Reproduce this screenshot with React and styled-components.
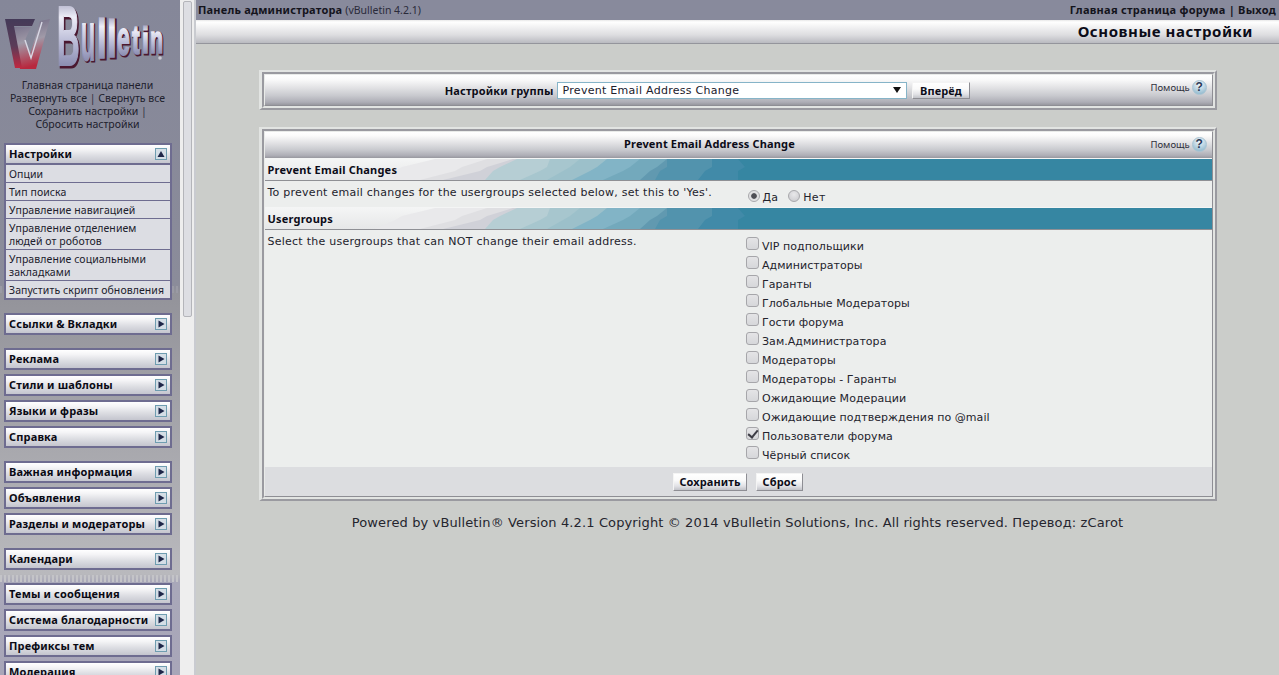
import React from "react";
import styled, { createGlobalStyle } from "styled-components";

const Global = createGlobalStyle`
  html, body { margin: 0; padding: 0; height: 100%; overflow: hidden; background: #cbcdca; }
  #root { height: 100%; }
  * { box-sizing: border-box; }
`;

const TAHOMA = `"Noto Sans", "Liberation Sans", sans-serif`;
const VERDANA = `"DejaVu Sans", "Liberation Sans", sans-serif`;

const Page = styled.div`
  display: flex;
  height: 675px;
  overflow: hidden;
`;

const Sidebar = styled.aside`
  width: 180px;
  flex: none;
  height: 675px;
  overflow: hidden;
  padding-left: 4px;
  font-family: ${TAHOMA};
  font-size: 10.5px;
  color: #20202c;
  background:
    repeating-linear-gradient(90deg, #9a9aa4 0 2px, transparent 2px 4px) 0 286px / 180px 7px no-repeat,
    repeating-linear-gradient(90deg, #c4c4c8 0 2px, transparent 2px 4px) 0 575px / 180px 7px no-repeat,
    linear-gradient(180deg, #858799 0, #8b8c9a 285px, #93939a 293px, #b9b9bd 574px, #a9a8b9 582px, #a8a6b8 675px);
`;

const Logo = styled.svg`
  display: block;
  width: 176px;
  height: 79px;
  margin-left: -4px;
`;

const QuickLinks = styled.div`
  width: 167px;
  height: 64px;
  text-align: center;
  line-height: 13px;
  white-space: nowrap;
`;

const Sep = styled.span`
  color: #303040;
`;

const NavStack = styled.div`
  display: flex;
  flex-direction: column;
  gap: 13px;
`;

const NavSection = styled.div`
  display: flex;
  flex-direction: column;
  gap: 4px;
`;

const NavGroup = styled.div`
  width: 168px;
  border: 2px solid #6e6c90;
  background: #6e6c90;
`;

const NavHead = styled.div`
  height: 18px;
  display: flex;
  align-items: center;
  justify-content: space-between;
  padding: 0 3px 1px 3px;
  font-weight: 700;
  font-size: 11px;
  letter-spacing: 0.15px;
  color: #0a0a14;
  white-space: nowrap;
  background: linear-gradient(180deg, #ffffff 0, #f4f4f6 25%, #dcdde2 60%, #c4c5ce 100%);
`;

const NavArrow = styled.svg`
  width: 12px;
  height: 12px;
  flex: none;
`;

const NavItem = styled.div`
  margin-top: 1px;
  padding: 3px 3px 1px 3px;
  line-height: 13px;
  letter-spacing: 0.08px;
  color: #20202c;
  background: #dcdde3;
  white-space: pre-line;
  ${NavHead} + & {
    margin-top: 2px;
  }
`;

const Scrollbar = styled.div`
  width: 16px;
  flex: none;
  height: 675px;
  padding: 1px 2px 0 3px;
  background: #eeeeee;
  border-right: 2px solid #c9cbd0;
`;

const Thumb = styled.div`
  height: 316px;
  background: #dddee3;
  border: 1px solid #b4b5ba;
  border-radius: 2px;
`;

const Main = styled.main`
  flex: 1;
  min-width: 0;
  font-family: ${VERDANA};
  color: #23232c;
`;

const TopBar = styled.div`
  height: 20px;
  padding: 0 3px 2px 2px;
  display: flex;
  align-items: center;
  justify-content: space-between;
  background: #888a9c;
  font-family: ${TAHOMA};
  font-size: 11px;
  color: #14141c;
  white-space: nowrap;
`;

const Strong = styled.b`
  font-weight: 700;
  letter-spacing: ${(p) => p.$ls}px;
`;

const Version = styled.span`
  font-size: 10.5px;
  color: #2a2a3a;
`;

const TitleBar = styled.header`
  height: 24px;
  padding: 0 26px 1px 0;
  display: flex;
  align-items: center;
  justify-content: flex-end;
  font-family: ${TAHOMA};
  font-weight: 700;
  font-size: 15px;
  letter-spacing: 0.55px;
  color: #0c0c18;
  border-bottom: 1px solid #94959c;
  background: linear-gradient(180deg, #e8e8e8 0, #ffffff 2px, #f2f2f3 30%, #dddde0 65%, #b9bac0 100%);
`;

const Content = styled.div`
  padding-top: 26px;
`;

const Frame = styled.section`
  width: 958px;
  margin: 0 auto ${(p) => p.$gap || 0}px;
  border-style: solid;
  border-width: 2px 2px 2px 3px;
  border-color: #e2e4e2 #9a9aa0 #9a9aa0 #e2e4e2;
`;

const FrameInner = styled.div`
  border-style: solid;
  border-width: 2px;
  border-color: #9a9aa0 #e2e4e2 #e2e4e2 #9a9aa0;
`;

const FrameBody = styled.div`
  border-style: solid;
  border-width: 1px;
  border-color: #e9ebe9 #8e8e94 #8e8e94 #e9ebe9;
  background: #eceeed;
`;

const CatBar = styled.div`
  height: ${(p) => p.$h}px;
  padding-bottom: ${(p) => p.$pb || 0}px;
  display: flex;
  align-items: center;
  background: linear-gradient(180deg, #ffffff 0, #fbfbfb 14%, #e6e6e8 38%, #c9cacf 68%, #aeaeb6 90%, #98989f 100%);
`;

const CatMain = styled.div`
  flex: 1;
  display: flex;
  align-items: center;
  justify-content: center;
  gap: 3px;
  padding-left: ${(p) => p.$pl || 0}px;
  font-family: ${TAHOMA};
  font-weight: 700;
  font-size: 11px;
  letter-spacing: 0.15px;
  color: #0c0c18;
  white-space: nowrap;
`;

const Help = styled.div`
  width: 61px;
  flex: none;
  display: flex;
  align-items: center;
  gap: 2px;
  font-family: ${TAHOMA};
  font-size: 9.5px;
  color: #30303c;
  transform: translateY(${(p) => p.$dy}px);
`;

const HelpBall = styled.span`
  width: 15px;
  height: 15px;
  flex: none;
  display: flex;
  align-items: center;
  justify-content: center;
  border-radius: 50%;
  font-family: "Liberation Sans", sans-serif;
  font-size: 12px;
  font-weight: 700;
  color: #2a3a58;
  background: radial-gradient(circle at 50% 25%, #f2f6f8 0, #bcd4e2 50%, #7fafc6 100%);
  border: 1px solid #a9c4d3;
`;

const Select = styled.div`
  width: 350px;
  height: 17px;
  padding: 0 5px 0 5px;
  display: flex;
  align-items: center;
  justify-content: space-between;
  background: #ffffff;
  border: 1px solid #86b4c8;
  font-family: ${VERDANA};
  font-weight: 400;
  font-size: 11px;
  letter-spacing: 0.28px;
  color: #20202c;
`;

const Caret = styled.span`
  width: 0;
  height: 0;
  border-left: 4px solid transparent;
  border-right: 4px solid transparent;
  border-top: 6px solid #111;
`;

const Button = styled.button`
  height: ${(p) => p.$h}px;
  padding: 0 ${(p) => p.$pad}px;
  margin: 0;
  border: 1px solid;
  border-color: #f4f4f4 #8e8e94 #8e8e94 #f4f4f4;
  background: linear-gradient(180deg, #ffffff 0, #fafafa 40%, #e2e2e6 75%, #c2c3c9 100%);
  font-family: ${TAHOMA};
  font-weight: 700;
  font-size: 11px;
  letter-spacing: 0.1px;
  line-height: 13px;
  color: #0c0c18;
`;

const GoButton = styled(Button)`
  margin-left: 2px;
`;

const SectionRow = styled.div`
  position: relative;
  height: 23px;
  padding: 0 0 1px 3px;
  display: flex;
  align-items: center;
  border-top: 1px solid #f4f5f5;
  border-bottom: 1px solid #8f9095;
  background: linear-gradient(180deg, #f4f5f5 0, #e6e7e8 100%);
  font-family: ${TAHOMA};
  font-weight: 700;
  font-size: 11px;
  letter-spacing: 0.2px;
  color: #0c0c18;
`;

const SectionLabel = styled.span`
  position: relative;
`;

const Wave = styled.svg`
  position: absolute;
  left: 0;
  top: 0;
  width: 947px;
  height: 21px;
`;

const Row = styled.div`
  display: flex;
  min-height: ${(p) => p.$h}px;
  font-size: 11px;
  letter-spacing: 0.25px;
`;

const RowLabel = styled.div`
  width: 481px;
  padding: ${(p) => p.$top}px 0 0 3px;
  line-height: 13px;
`;

const RadioGroup = styled.div`
  display: flex;
  align-items: flex-start;
  padding: 10px 0 0 2px;
`;

const RadioLabel = styled.label`
  display: flex;
  align-items: center;
  margin-right: 10px;
  line-height: 13px;
`;

const RadioBox = styled.input`
  appearance: none;
  width: 12px;
  height: 12px;
  margin: -4px 3px 0 0;
  border-radius: 50%;
  border: 1px solid #a8a8ac;
  background: ${(p) =>
    p.checked
      ? "radial-gradient(circle, #4e4e54 0, #4e4e54 2.4px, #dcdcde 3.2px, #eeeeee 100%)"
      : "radial-gradient(circle at 50% 35%, #e8e8ea 0, #c8c8cc 100%)"};
`;

const CheckList = styled.div`
  display: flex;
  flex-direction: column;
  padding-top: 7px;
  letter-spacing: 0.05px;
`;

const CheckItem = styled.label`
  height: 19px;
  display: flex;
  align-items: flex-start;
  line-height: 19px;
  white-space: nowrap;
`;

const CheckBox = styled.input`
  appearance: none;
  position: relative;
  width: 13px;
  height: 13px;
  margin: 0 3.5px 0 0;
  border: 1px solid #a6a6aa;
  border-radius: 3px;
  background: linear-gradient(180deg, #e4e4e6, #d6d7da);
  &:checked::before {
    content: "";
    position: absolute;
    left: 3px;
    top: 0;
    width: 4px;
    height: 8px;
    border: solid #3c3c44;
    border-width: 0 2px 2px 0;
    transform: rotate(40deg);
  }
`;

const FootBar = styled.div`
  height: 29px;
  display: flex;
  align-items: center;
  justify-content: center;
  gap: 9px;
  background: #dcdde0;
`;

const Copy = styled.div`
  margin-top: 14px;
  text-align: center;
  font-size: 13px;
  line-height: 16px;
  letter-spacing: 0.12px;
  color: #25252e;
  white-space: nowrap;
`;

const logoLetters = [
  ["B", 57, 65, 21, 58, 0.67, 0.69],
  ["u", 81, 60, 13, 36, 0.56, 0.52],
  ["l", 97, 58, 7, 40, 0.2, 0.72],
  ["l", 107, 57, 7, 37, 0.2, 0.72],
  ["e", 117, 55, 12, 25, 0.52, 0.52],
  ["t", 132, 54, 7, 28, 0.3, 0.68],
  ["i", 142, 53, 5, 26, 0.2, 0.72],
  ["n", 150, 53, 12, 20, 0.56, 0.52],
];

const LogoMark = () => (
  <Logo viewBox="0 0 176 79">
    <defs>
      <linearGradient id="metal" x1="0" y1="0" x2="0" y2="1">
        <stop offset="0" stopColor="#7c7ca0" />
        <stop offset="0.3" stopColor="#eeeef8" />
        <stop offset="0.62" stopColor="#b0b2d0" />
        <stop offset="1" stopColor="#6c6e96" />
      </linearGradient>
      <linearGradient id="box" x1="0" y1="0" x2="0.2" y2="1">
        <stop offset="0" stopColor="#6a6480" />
        <stop offset="0.5" stopColor="#a09aa8" />
        <stop offset="1" stopColor="#b8283e" />
      </linearGradient>
      <linearGradient id="frame" x1="0" y1="0" x2="0" y2="1">
        <stop offset="0" stopColor="#443a58" />
        <stop offset="0.55" stopColor="#5a3c58" />
        <stop offset="1" stopColor="#c02840" />
      </linearGradient>
    </defs>
    <polygon points="14,27 31,27 25,40 30,55 40,21 50,19 36,69 20,69" fill="url(#box)" />
    <polygon points="5,19 35,19 32,26 14,26 22,68 15,68" fill="url(#frame)" />
    <polyline points="25,40 31,58 42,22" fill="none" stroke="#d8d8e4" strokeWidth="1.4" />
    {logoLetters.map(([c, x, y, w, h, wr, hr], i) => (
      <g key={i} transform={`translate(${x} ${y}) scale(${w / (wr * 100)} ${h / (hr * 100)})`}>
        <text
          x="4"
          y="2"
          fontFamily="Liberation Sans"
          fontWeight="700"
          fontSize="100"
          fill="#4a1830"
          stroke="#4a1830"
          strokeWidth="2.4"
          vectorEffect="non-scaling-stroke"
        >
          {c}
        </text>
        <text
          fontFamily="Liberation Sans"
          fontWeight="700"
          fontSize="100"
          fill="url(#metal)"
          stroke="url(#metal)"
          strokeWidth="1.4"
          vectorEffect="non-scaling-stroke"
        >
          {c}
        </text>
      </g>
    ))}
    <circle cx="160" cy="58" r="1.8" fill="#c8c8d0" />
  </Logo>
);

const Arrow = ({ up }) => (
  <NavArrow viewBox="0 0 12 12">
    <rect x="0.5" y="0.5" width="11" height="11" fill="#d4dee6" stroke="#6f9db0" />
    <polygon points={up ? "2.5,9 6,3 9.5,9" : "3.5,2.5 9.5,6 3.5,9.5"} fill="#1e2648" />
  </NavArrow>
);

const waveBands = [
  ["#e9e9eb", 110, 130, 170],
  ["#dfdfe2", 155, 190, 222],
  ["#d0d1d8", 178, 215, 248],
  ["#b6ced4", 220, 228, 252],
  ["#a7c6ce", 255, 275, 285],
  ["#9cc0ca", 282, 298, 315],
  ["#82b4c6", 307, 325, 342],
  ["#73a9bc", 338, 358, 375],
  ["#6199b0", 375, 385, 402],
  ["#5293ad", 390, 395, 402],
  ["#418aa8", 433, 440, 447],
  ["#3686a2", 473, 473, 473],
];

const WaveArt = () => (
  <Wave viewBox="0 0 947 21" preserveAspectRatio="none">
    {waveBands.map(([fill, b, m, t]) => (
      <polygon key={fill} fill={fill} points={`${t},0 947,0 947,21 ${b},21 ${m},12 ${m + 7},8`} />
    ))}
  </Wave>
);

const nav = [
  [{ title: "Настройки", open: true, items: ["Опции", "Тип поиска", "Управление навигацией", "Управление отделением\nлюдей от роботов", "Управление социальными\nзакладками", "Запустить скрипт обновления"] }],
  [{ title: "Ссылки & Вкладки" }],
  [{ title: "Реклама" }, { title: "Стили и шаблоны" }, { title: "Языки и фразы" }, { title: "Справка" }],
  [{ title: "Важная информация" }, { title: "Объявления" }, { title: "Разделы и модераторы" }],
  [{ title: "Календари" }],
  [{ title: "Темы и сообщения" }, { title: "Система благодарности" }, { title: "Префиксы тем" }, { title: "Модерация" }],
];

const groups = [
  "VIP подпольщики", "Администраторы", "Гаранты", "Глобальные Модераторы", "Гости форума", "Зам.Администратора",
  "Модераторы", "Модераторы - Гаранты", "Ожидающие Модерации", "Ожидающие подтверждения по @mail", "Пользователи форума", "Чёрный список",
];

const HelpLink = ({ dy }) => (
  <Help $dy={dy}>
    Помощь <HelpBall>?</HelpBall>
  </Help>
);

export default function App() {
  return (
    <Page>
      <Global />
      <Sidebar>
        <LogoMark />
        <QuickLinks>
          Главная страница панели<br />
          Развернуть все <Sep>|</Sep> Свернуть все<br />
          Сохранить настройки <Sep>|</Sep><br />
          Сбросить настройки
        </QuickLinks>
        <NavStack>
          {nav.map((section, i) => (
            <NavSection key={i}>
              {section.map((g) => (
                <NavGroup key={g.title}>
                  <NavHead>
                    {g.title}
                    <Arrow up={g.open} />
                  </NavHead>
                  {g.items && g.items.map((it) => <NavItem key={it}>{it}</NavItem>)}
                </NavGroup>
              ))}
            </NavSection>
          ))}
        </NavStack>
      </Sidebar>
      <Scrollbar>
        <Thumb />
      </Scrollbar>
      <Main>
        <TopBar>
          <span>
            <Strong $ls={0.2}>Панель администратора</Strong> <Version>(vBulletin 4.2.1)</Version>
          </span>
          <Strong $ls={0.27}>Главная страница форума | Выход</Strong>
        </TopBar>
        <TitleBar>Основные настройки</TitleBar>
        <Content>
          <Frame $gap={17}>
            <FrameInner>
              <FrameBody>
                <CatBar $h={30}>
                  <CatMain>
                    Настройки группы
                    <Select>
                      Prevent Email Address Change
                      <Caret />
                    </Select>
                    <GoButton $pad={7.5} $h={17}>Вперёд</GoButton>
                  </CatMain>
                  <HelpLink dy={-3} />
                </CatBar>
              </FrameBody>
            </FrameInner>
          </Frame>
          <Frame>
            <FrameInner>
              <FrameBody>
                <CatBar $h={26} $pb={4}>
                  <CatMain $pl={4}>Prevent Email Address Change</CatMain>
                  <HelpLink dy={1} />
                </CatBar>
                <SectionRow>
                  <WaveArt />
                  <SectionLabel>Prevent Email Changes</SectionLabel>
                </SectionRow>
                <Row $h={26}>
                  <RowLabel $top={5}>To prevent email changes for the usergroups selected below, set this to 'Yes'.</RowLabel>
                  <RadioGroup>
                    <RadioLabel><RadioBox type="radio" name="yn" checked readOnly />Да</RadioLabel>
                    <RadioLabel><RadioBox type="radio" name="yn" readOnly />Нет</RadioLabel>
                  </RadioGroup>
                </Row>
                <SectionRow>
                  <WaveArt />
                  <SectionLabel>Usergroups</SectionLabel>
                </SectionRow>
                <Row $h={237}>
                  <RowLabel $top={5}>Select the usergroups that can NOT change their email address.</RowLabel>
                  <CheckList>
                    {groups.map((g) => (
                      <CheckItem key={g}>
                        <CheckBox type="checkbox" defaultChecked={g === "Пользователи форума"} />
                        {g}
                      </CheckItem>
                    ))}
                  </CheckList>
                </Row>
                <FootBar>
                  <Button $pad={5.5} $h={18}>Сохранить</Button>
                  <Button $pad={5.5} $h={18}>Сброс</Button>
                </FootBar>
              </FrameBody>
            </FrameInner>
          </Frame>
          <Copy>Powered by vBulletin® Version 4.2.1 Copyright © 2014 vBulletin Solutions, Inc. All rights reserved. Перевод: zCarot</Copy>
        </Content>
      </Main>
    </Page>
  );
}
